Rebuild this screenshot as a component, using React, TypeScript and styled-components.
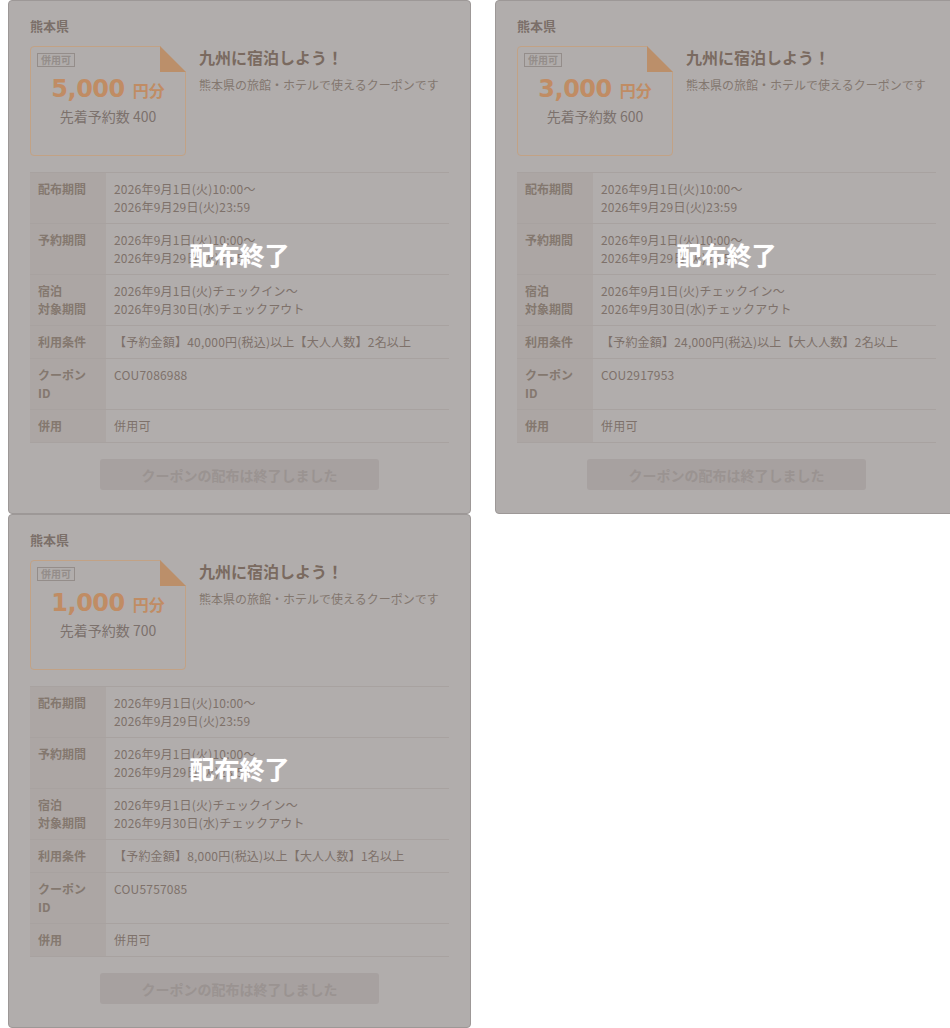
import React from 'react'
import styled, { createGlobalStyle } from 'styled-components'

const GlobalStyle = createGlobalStyle`
  html, body {
    margin: 0;
    padding: 0;
    background: #ffffff;
    overflow-x: hidden;
  }
  body {
    margin-left: 8px;
    font-family: "Noto Sans CJK JP", "Noto Sans", sans-serif;
  }
`

type Coupon = {
  amount: string
  count: number
  price: string
  people: string
  id: string
}

const coupons: Coupon[] = [
  { amount: '5,000', count: 400, price: '40,000', people: '2', id: 'COU7086988' },
  { amount: '3,000', count: 600, price: '24,000', people: '2', id: 'COU2917953' },
  { amount: '1,000', count: 700, price: '8,000', people: '1', id: 'COU5757085' },
]

const CouponCard = ({ c }: { c: Coupon }) => {
  const rows: [React.ReactNode, React.ReactNode][] = [
    ['配布期間', <>2026年9月1日(火)10:00～<br />2026年9月29日(火)23:59</>],
    ['予約期間', <>2026年9月1日(火)10:00～<br />2026年9月29日(火)23:59</>],
    [<>宿泊<br />対象期間</>, <>2026年9月1日(火)チェックイン～<br />2026年9月30日(水)チェックアウト</>],
    ['利用条件', <>【予約金額】{c.price}円(税込)以上【大人人数】{c.people}名以上</>],
    [<>クーポン<br />ID</>, c.id],
    ['併用', '併用可'],
  ]

  return (
    <Card>
      <Area>熊本県</Area>
      <Top>
        <Ticket>
          <Fold viewBox='0 0 26 26'>
            <polygon points='0,0 26,0 26,26' fill='#b1adac' />
            <polygon points='0,0 0,26 26,26' fill='#bb8f6a' />
          </Fold>
          <Badge>併用可</Badge>
          <Amount>
            {c.amount} <small>円分</small>
          </Amount>
          <Count>先着予約数 {c.count}</Count>
        </Ticket>
        <Info>
          <Title>九州に宿泊しよう！</Title>
          <Desc>熊本県の旅館・ホテルで使えるクーポンです</Desc>
        </Info>
      </Top>
      <Table>
        {rows.map(([label, value], i) => (
          <Row key={i}>
            <Label>{label}</Label>
            <Value>{value}</Value>
          </Row>
        ))}
      </Table>
      <ButtonWrap>
        <EndedButton>クーポンの配布は終了しました</EndedButton>
      </ButtonWrap>
      <Overlay>配布終了</Overlay>
    </Card>
  )
}

export default function App() {
  return (
    <>
      <GlobalStyle />
      <Grid>
        {coupons.map(c => (
          <CouponCard key={c.id} c={c} />
        ))}
      </Grid>
    </>
  )
}

const Grid = styled.div`
  display: grid;
  grid-template-columns: repeat(2, 463px);
  column-gap: 24px;
  width: max-content;
`

const Card = styled.div`
  position: relative;
  box-sizing: border-box;
  height: 514px;
  background: #b1adac;
  border: 1px solid #9d9897;
  border-radius: 4px;
  padding: 15px 21px 0 21px;
`

const Area = styled.div`
  font-size: 13px;
  line-height: 20px;
  font-weight: 700;
  color: #7b6f69;
`

const Top = styled.div`
  display: flex;
  gap: 13px;
  margin-top: 10px;
`

const Ticket = styled.div`
  position: relative;
  box-sizing: border-box;
  width: 156px;
  height: 110px;
  flex-shrink: 0;
  border: 1px solid #c2a285;
  border-radius: 4px;
  padding: 6px 6px 0;
  display: flex;
  flex-direction: column;
  align-items: center;
`

const Fold = styled.svg`
  position: absolute;
  top: -1px;
  right: -1px;
  width: 26px;
  height: 26px;
`

const Badge = styled.span`
  align-self: flex-start;
  font-size: 10px;
  line-height: 12px;
  font-weight: 700;
  color: #948d8a;
  border: 1px solid #948d8a;
  padding: 0 3px;
`

const Amount = styled.div`
  margin-top: 7px;
  font-family: "DejaVu Sans", "Noto Sans CJK JP", sans-serif;
  font-size: 24px;
  line-height: 30px;
  font-weight: 700;
  color: #c08c64;
  letter-spacing: -0.5px;

  small {
    font-family: "Noto Sans CJK JP", sans-serif;
    font-size: 16px;
    letter-spacing: 0;
  }
`

const Count = styled.div`
  font-size: 14px;
  line-height: 22px;
  color: #7c716c;
`

const Info = styled.div`
  display: flex;
  flex-direction: column;
`

const Title = styled.div`
  font-size: 16px;
  line-height: 22px;
  font-weight: 700;
  color: #7a6a60;
`

const Desc = styled.div`
  margin-top: 8px;
  font-size: 12px;
  line-height: 18px;
  color: #83776f;
`

const Table = styled.div`
  margin-top: 16px;
  border-top: 1px solid #a8a2a0;
`

const Row = styled.div`
  display: flex;
  border-bottom: 1px solid #a8a2a0;
`

const Label = styled.div`
  box-sizing: border-box;
  width: 76px;
  flex-shrink: 0;
  background: #aca6a4;
  padding: 7px 8px;
  font-size: 12px;
  line-height: 18px;
  font-weight: 700;
  color: #84786f;
`

const Value = styled.div`
  padding: 7px 8px;
  font-size: 12px;
  line-height: 18px;
  color: #7e716a;
  letter-spacing: 0.2px;
`

const ButtonWrap = styled.div`
  display: flex;
  justify-content: center;
  margin-top: 16px;
`

const EndedButton = styled.div`
  width: 279px;
  height: 31px;
  border-radius: 3px;
  background: #a7a1a0;
  color: #9a9391;
  font-size: 14px;
  font-weight: 700;
  display: flex;
  align-items: center;
  justify-content: center;
`

const Overlay = styled.div`
  position: absolute;
  inset: 0 0 6px 0;
  display: flex;
  align-items: center;
  justify-content: center;
  color: #ffffff;
  font-size: 25px;
  font-weight: 700;
  text-shadow: 0 0 1px rgba(255, 255, 255, 0.6);
`
